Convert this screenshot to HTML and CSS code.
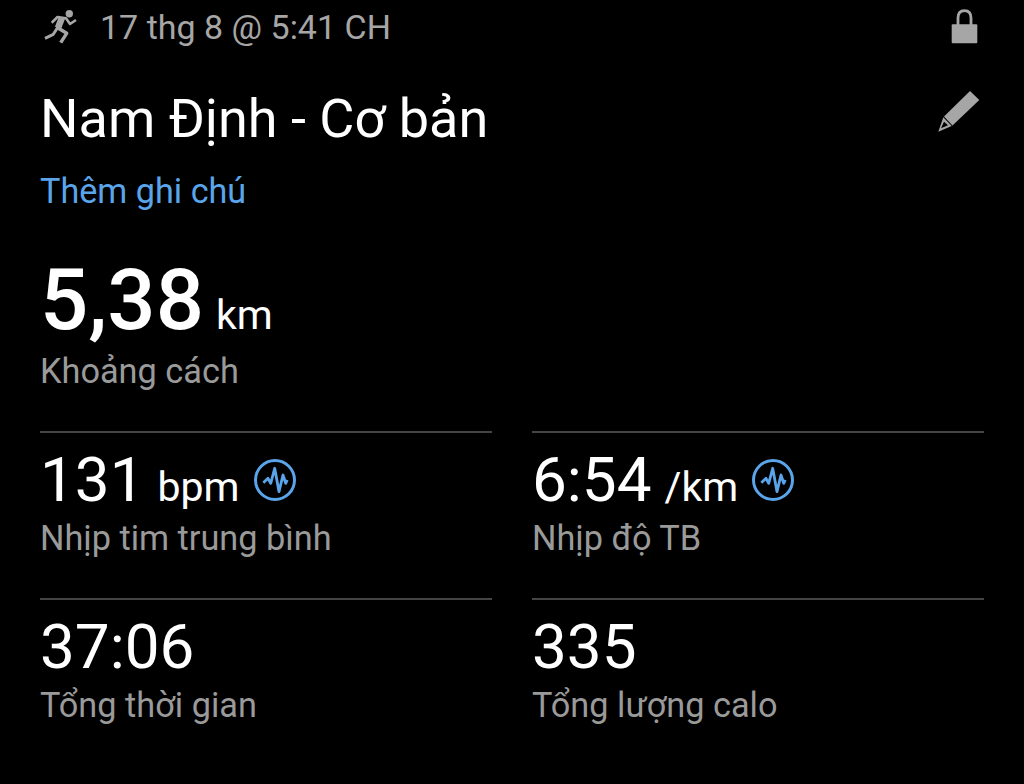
FILE: index.html
```html
<!DOCTYPE html>
<html lang="vi">
<head>
    <meta charset="UTF-8">
    <meta name="viewport" content="width=device-width, initial-scale=1.0">
    <title>Nam Định - Cơ bản</title>
    <link rel="stylesheet" href="styles.css">
</head>
<body>
    <div class="container">
        <div class="top-row">
            <svg class="run-icon" viewBox="0 0 36 34" width="36" height="34">
                <circle cx="26.3" cy="3.7" r="3.7" fill="#a6a6a6"/>
                <path d="M8.7 12.7 L14.5 7 L23 8.3 L27 14 L33 10" fill="none" stroke="#a6a6a6" stroke-width="2.6" stroke-linejoin="round"/>
                <path d="M19 7.5 L15 18" fill="none" stroke="#a6a6a6" stroke-width="6.5"/>
                <path d="M15 17 L10.3 24.3 L2 28.3" fill="none" stroke="#a6a6a6" stroke-width="3" stroke-linejoin="round"/>
                <path d="M15 18 L23.7 23.3 L17.7 32.7" fill="none" stroke="#a6a6a6" stroke-width="3.4" stroke-linejoin="round"/>
            </svg>
            <span class="date">17 thg 8 @ 5:41 CH</span>
            <svg class="lock-icon" viewBox="0 0 28 36" width="28" height="36">
                <path d="M8 16 V9 C8 4 10 1.6 14.5 1.6 C19 1.6 21 4 21 9 V16" fill="none" stroke="#a6a6a6" stroke-width="2.8"/>
                <rect x="1.7" y="15.3" width="25.6" height="19" rx="1" fill="#a6a6a6"/>
            </svg>
        </div>

        <div class="title-row">
            <h1>Nam Định - Cơ bản</h1>
            <svg class="edit-icon" viewBox="0 0 42 42" width="42" height="42">
                <path d="M32 0 L41.3 9 L14.5 34.5 L6 25.5 Z" fill="#a6a6a6"/>
                <path d="M5.3 26.3 L13.7 35 L0.3 40.7 Z M6 30.7 L3 37.3 L10 34.3 Z" fill="#a6a6a6" fill-rule="evenodd"/>
            </svg>
        </div>

        <div class="note">Thêm ghi chú</div>

        <div class="distance">
            <div class="value"><span class="big">5,38</span> <span class="unit">km</span></div>
            <div class="label">Khoảng cách</div>
        </div>

        <div class="stats">
            <div class="stat">
                <div class="value"><span class="num">131</span><span class="unit">bpm</span>
                    <svg class="pulse" viewBox="0 0 44 44" width="44" height="44">
                        <circle cx="22" cy="22" r="19.5" fill="none" stroke="#5aa5ea" stroke-width="3"/>
                        <path d="M10.3 24.7 L15 20.3 L17.7 25.3 L21.7 10.3 L26 33.7 L30 17 L32.7 25.3 L34.3 22" fill="none" stroke="#5aa5ea" stroke-width="2.8" stroke-linejoin="round"/>
                    </svg>
                </div>
                <div class="label">Nhịp tim trung bình</div>
            </div>
            <div class="stat">
                <div class="value"><span class="num">6:54</span><span class="unit">/km</span>
                    <svg class="pulse" viewBox="0 0 44 44" width="44" height="44">
                        <circle cx="22" cy="22" r="19.5" fill="none" stroke="#5aa5ea" stroke-width="3"/>
                        <path d="M10.3 24.7 L15 20.3 L17.7 25.3 L21.7 10.3 L26 33.7 L30 17 L32.7 25.3 L34.3 22" fill="none" stroke="#5aa5ea" stroke-width="2.8" stroke-linejoin="round"/>
                    </svg>
                </div>
                <div class="label">Nhịp độ TB</div>
            </div>
            <div class="stat">
                <div class="value"><span class="num">37:06</span></div>
                <div class="label">Tổng thời gian</div>
            </div>
            <div class="stat">
                <div class="value"><span class="num">335</span></div>
                <div class="label">Tổng lượng calo</div>
            </div>
        </div>
    </div>
</body>
</html>
```

FILE: styles.css
```css
* { margin: 0; padding: 0; box-sizing: border-box; }
html, body { height: 100%; }
body { background: #000; color: #fff; font-family: Roboto, sans-serif; overflow: hidden; }
.container { padding: 8px 40px 0 40px; }

.top-row { display: flex; align-items: center; height: 38px; }
.run-icon { margin-left: 3px; }
.date { margin-left: 21px; font-size: 34px; color: #a6a6a6; }
.lock-icon { margin-left: auto; margin-right: 6px; }

.title-row { display: flex; justify-content: space-between; align-items: center; margin-top: 39px; height: 66px; }
h1 { font-size: 54px; font-weight: 400; color: #fff; }
.edit-icon { align-self: flex-start; margin-top: 6px; margin-right: 4px; }

.note { margin-top: 18px; font-size: 34.2px; line-height: 44px; color: #5aa5ea; }

.distance { margin-top: 36px; }
.big { font-size: 85px; font-weight: 500; line-height: 103px; }
.unit { font-size: 41px; margin-left: 8px; }
.label { font-size: 34.3px; line-height: 38px; color: #9a9a9a; }

.stats { display: grid; grid-template-columns: 452px 452px; column-gap: 40px; margin-top: 41px; }
.stat { border-top: 2px solid #444; height: 167px; }
.stat .value { display: flex; align-items: baseline; height: 86px; padding-top: 10px; }
.num { font-size: 62px; }
.stat .unit { margin-left: 13px; }
.pulse { align-self: center; margin-left: 13px; margin-top: -2px; }
```
